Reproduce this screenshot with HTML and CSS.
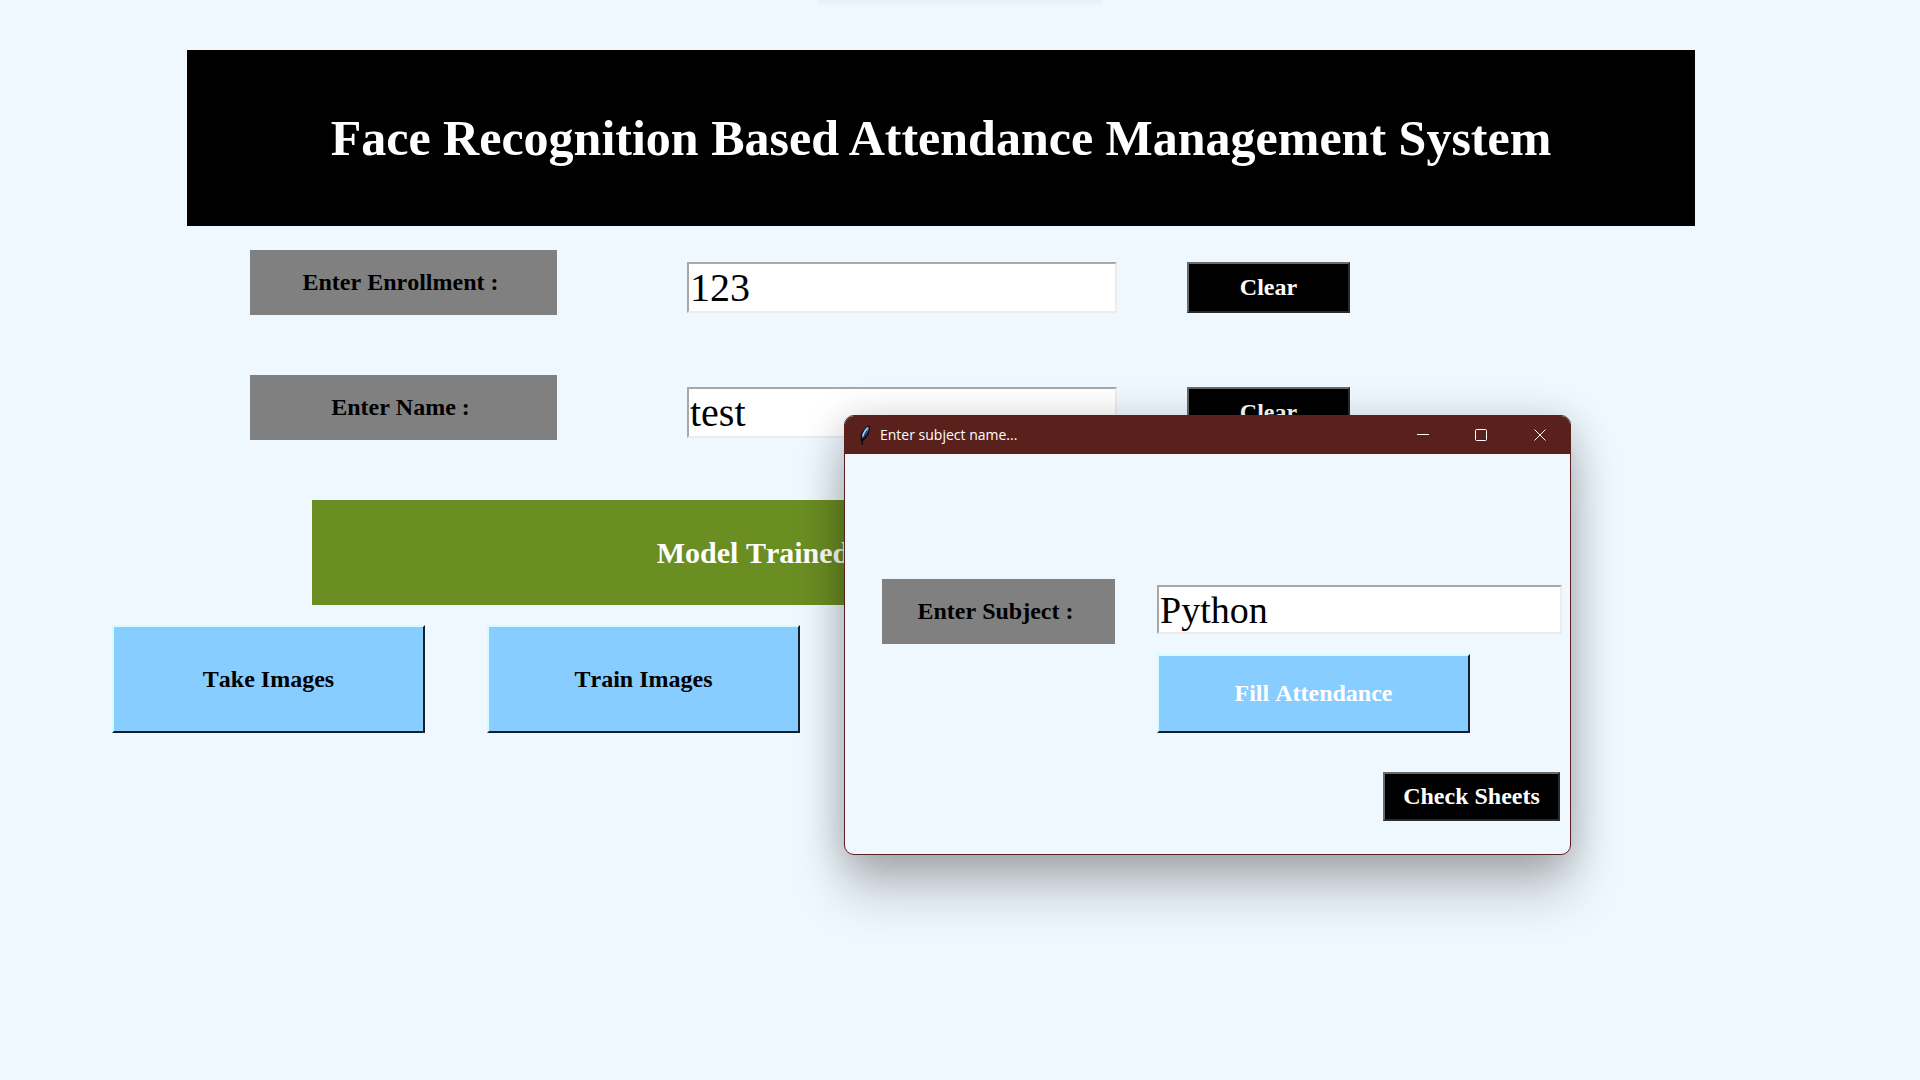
FILE: index.html
```html
<!DOCTYPE html>
<html lang="en">
<head>
<meta charset="utf-8">
<meta name="viewport" content="width=device-width, initial-scale=1">
<title>Face Recognition Based Attendance Management System</title>
<link rel="stylesheet" href="styles.css">
</head>
<body>
<main class="app">
  <header class="banner"><h1 class="banner-title">Face Recognition Based Attendance Management System</h1></header>

  <form class="student-form">
    <label class="tag" for="enrollment">Enter Enrollment : </label>
    <input class="field" id="enrollment" type="text" value="123">
    <button class="btn btn-dark" type="button">Clear</button>

    <label class="tag" for="name">Enter Name : </label>
    <input class="field" id="name" type="text" value="test">
    <button class="btn btn-dark" type="button">Clear</button>
  </form>

  <p class="notice" role="status">Model Trained</p>

  <div class="actions">
    <button class="btn btn-sky" type="button">Take Images</button>
    <button class="btn btn-sky" type="button">Train Images</button>
  </div>
</main>

<section class="window" role="dialog" aria-labelledby="window-title">
  <div class="titlebar">
    <svg class="feather" viewBox="0 0 20 20" aria-hidden="true">
      <path d="M14.500 0.500C11 1.500 7 5.500 6 10C5.500 12 5.400 14 6 15.300L6.600 20H7.800L8 15.800C10.500 14.500 13.600 10 14.600 5.500C15 3.500 15 2 14.500 0.500Z" fill="#0b0b14"/>
      <path d="M13.600 1.800C10.500 3.500 7.800 7 7 11L7.400 13.500C10 11.500 12.800 8 13.600 4.500Z" fill="#4a80c4"/>
      <path d="M13 2.500C10.500 4.500 8.600 7.500 7.800 11.500" fill="none" stroke="#a9cdf2" stroke-width="1.400"/>
      <path d="M12 6L8.400 12.500" stroke="#1c3357" stroke-width="1"/>
    </svg>
    <h2 class="window-title" id="window-title">Enter subject name...</h2>
    <button class="caption-btn" type="button" aria-label="Minimize"><svg class="glyph" viewBox="0 0 12 12"><path d="M0 5.500H12"/></svg></button>
    <button class="caption-btn" type="button" aria-label="Maximize"><svg class="glyph" viewBox="0 0 12 12"><rect x="0.500" y="0.500" width="11" height="11" rx="1"/></svg></button>
    <button class="caption-btn" type="button" aria-label="Close"><svg class="glyph" viewBox="0 0 12 12"><path d="M0.500 0.500L11.500 11.500M11.500 0.500L0.500 11.500"/></svg></button>
  </div>
  <form class="subject-form">
    <label class="tag" for="subject">Enter Subject : </label>
    <div class="subject-entry">
      <input class="field" id="subject" type="text" value="Python">
      <button class="btn btn-sky btn-fill" type="button">Fill Attendance</button>
      <button class="btn btn-dark btn-sheets" type="button">Check Sheets</button>
    </div>
  </form>
</section>
</body>
</html>
```
FILE: styles.css
```css
* {
  box-sizing: border-box;
}

body {
  margin: 0;
  min-height: 100vh;
  background: #f0f8ff;
  font-family: "Liberation Serif", "Times New Roman", serif;
  font-kerning: none;
}

.app {
  padding-top: 50px;
}

/* faint shade under the middle of the window's top edge */
.app::before {
  content: "";
  position: absolute;
  top: 0;
  left: calc(50% - 142px);
  width: 284px;
  height: 8px;
  background: linear-gradient(rgba(0, 0, 0, 0.03), rgba(0, 0, 0, 0));
}

.banner {
  margin: 0 225px 0 187px;
  padding: 58px 16px;
  background: #000;
  color: #fff;
  text-align: center;
}

.banner-title {
  margin: 0;
  font-size: 50px;
  font-kerning: normal;
  line-height: 60px;
}

.student-form {
  display: grid;
  grid-template-columns: 367px minmax(0, 1fr) 163px;
  gap: 60px 70px;
  align-items: start;
  margin: 24px 570px 0 250px;
}

.tag {
  width: 307px;
  background: #808080;
  color: #000;
  font-size: 24px;
  font-weight: bold;
  line-height: 65px;
  text-align: center;
  white-space: pre;
}

.field {
  width: 100%;
  height: 51px;
  padding: 0 1px;
  border: 2px solid;
  border-color: #a8a8a8 #ececec #ececec #a8a8a8;
  background: #fff;
  color: #000;
  font: 40px "Liberation Serif", "Times New Roman", serif;
  font-kerning: none;
}

.btn {
  padding: 0;
  border: 2px solid;
  font: bold 24px "Liberation Serif", "Times New Roman", serif;
  font-kerning: none;
}

.btn-dark {
  height: 51px;
  border-color: #6a6a6a #2a2a2a #2a2a2a #6a6a6a;
  background: #000;
  color: #fff;
}

.btn-sky {
  width: 313px;
  height: 108px;
  border-color: #d8fbff #14212c #14212c #d8fbff;
  background: #87cdff;
  color: #000;
}

.student-form .field,
.student-form .btn {
  margin-top: 12px;
}

.notice {
  margin: 60px 726px 0 312px;
  background: #6b8e23;
  color: #fff;
  font-size: 30px;
  font-weight: bold;
  line-height: 105px;
  text-align: center;
}

.actions {
  display: flex;
  gap: 62px;
  margin: 20px 0 0 112px;
}

.window {
  position: absolute;
  top: 415px;
  left: 844px;
  width: 727px;
  overflow: hidden;
  border: 1px solid #5a201b;
  border-radius: 10px;
  background: #f0f8ff;
  box-shadow: 0 36px 52px rgba(0, 0, 0, 0.22), 0 6px 40px rgba(0, 0, 0, 0.2);
}

.titlebar {
  display: flex;
  align-items: center;
  height: 38px;
  padding-left: 10px;
  background: #5a201b;
  color: #fff;
}

.feather {
  width: 20px;
  height: 20px;
}

.window-title {
  flex: 1;
  margin: 0 0 0 5px;
  font: 14px/20px "Open Sans", "Noto Sans", sans-serif;
}

.caption-btn {
  display: grid;
  place-items: center;
  width: 58px;
  height: 38px;
  padding: 0;
  border: 0;
  background: none;
}

.caption-btn:last-child {
  width: 60px;
}

.glyph {
  width: 12px;
  height: 12px;
  fill: none;
  stroke: #fff;
}

.subject-form {
  display: flex;
  justify-content: space-between;
  align-items: flex-start;
  padding: 125px 8px 33px 37px;
}

.subject-form .tag {
  width: 233px;
}

.subject-entry {
  display: flex;
  flex-direction: column;
  width: 405px;
  padding-top: 6px;
}

.subject-entry .field {
  height: 49px;
  font-size: 38px;
}

.btn-fill {
  height: 79px;
  margin-top: 20px;
  color: #fff;
}

.btn-sheets {
  align-self: flex-end;
  width: 177px;
  height: 49px;
  margin: 39px 2px 0 0;
}
```
